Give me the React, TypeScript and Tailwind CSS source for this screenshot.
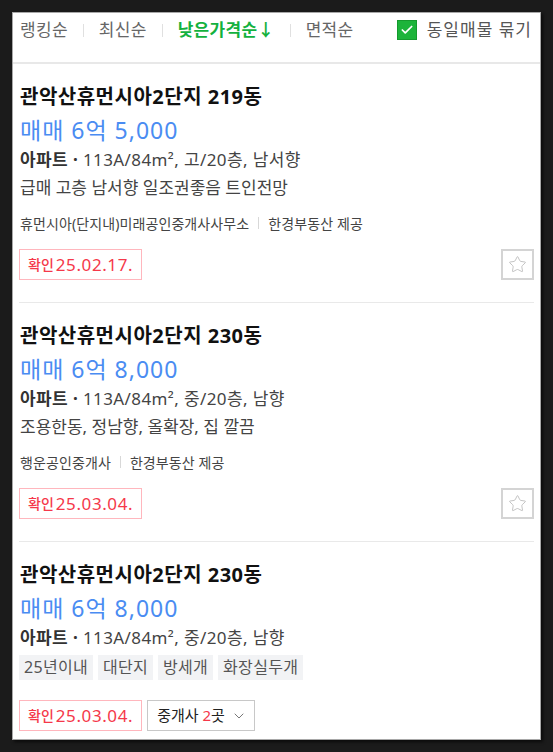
import React from "react";
import { Star, ChevronDown, Check } from "lucide-react";

type Item = {
  title: string;
  price: string;
  spec: string;
  desc?: string;
  tags?: string[];
  agency?: string;
  provider?: string;
  confirmed: string;
  brokers?: number;
};

const items: Item[] = [
  {
    title: "관악산휴먼시아2단지 219동",
    price: "매매 6억 5,000",
    spec: "113A/84m², 고/20층, 남서향",
    desc: "급매 고층 남서향 일조권좋음 트인전망",
    agency: "휴먼시아(단지내)미래공인중개사사무소",
    provider: "한경부동산 제공",
    confirmed: "25.02.17.",
  },
  {
    title: "관악산휴먼시아2단지 230동",
    price: "매매 6억 8,000",
    spec: "113A/84m², 중/20층, 남향",
    desc: "조용한동, 정남향, 올확장, 집 깔끔",
    agency: "행운공인중개사",
    provider: "한경부동산 제공",
    confirmed: "25.03.04.",
  },
  {
    title: "관악산휴먼시아2단지 230동",
    price: "매매 6억 8,000",
    spec: "113A/84m², 중/20층, 남향",
    tags: ["25년이내", "대단지", "방세개", "화장실두개"],
    confirmed: "25.03.04.",
    brokers: 2,
  },
];

const sorts = ["랭킹순", "최신순", "낮은가격순", "면적순"];

const Sep = () => <span className="mx-[15px] h-[13px] w-px bg-[#e0e0e0]" />;

const ArticleRow = ({ item, last }: { item: Item; last: boolean }) => {
  return (
    <div className="px-[6px]">
      <div className={`pt-[17px] ${last ? "" : "pb-[22px] border-b border-[#e9e9e9]"}`}>
        <div className="pl-[1px] h-[32px] leading-[32px] text-[20px] font-bold text-[#111] tracking-[0.5px]">
          {item.title}
        </div>
        <div className="pl-[1px] h-[34px] leading-[34px] text-[23px] text-[#4a8cf2] tracking-[1px]">
          {item.price}
        </div>
        <div className="pl-[1px] h-[26px] leading-[26px] text-[17px] text-[#444] tracking-[0.4px]">
          <span className="font-bold text-[#333]">아파트 · </span>
          {item.spec}
        </div>
        {item.desc && (
          <div className="pl-[1px] h-[30px] leading-[30px] text-[17px] text-[#444]">
            {item.desc}
          </div>
        )}
        {item.tags && (
          <div className="mt-[4px] flex gap-[5px]">
            {item.tags.map((t) => (
              <span
                key={t}
                className="h-[25px] leading-[25px] px-[5px] bg-[#f2f3f5] text-[16px] text-[#555] tracking-[0.3px]"
              >
                {t}
              </span>
            ))}
          </div>
        )}
        {item.agency && (
          <div className="mt-[7px] pl-[1px] h-[26px] flex items-center text-[14px] text-[#444] tracking-[0.1px]">
            <span>{item.agency}</span>
            <span className="mx-[9px] h-[12px] w-px bg-[#d8d8d8]" />
            <span>{item.provider}</span>
          </div>
        )}
        <div className={`${item.tags ? "mt-[20px]" : "mt-[13px]"} flex items-center`}>
          <span className="h-[31px] px-[8px] flex items-center border border-[#ffb6bd] text-[#f5384a]">
            <span className="text-[14px] font-medium mr-[2px]">확인</span>
            <span className="text-[17px] tracking-[0.6px]">{item.confirmed}</span>
          </span>
          {item.brokers && (
            <span className="ml-[5px] h-[31px] pl-[9px] pr-[7px] flex items-center border border-[#c8c8c8] text-[15px] text-[#222]">
              중개사&nbsp;<span className="text-[#f5384a]">{item.brokers}</span>곳
              <ChevronDown size={16} strokeWidth={1.5} className="ml-[6px] text-[#777]" />
            </span>
          )}
          {!item.brokers && (
            <span className="ml-auto w-[33px] h-[31px] flex items-center justify-center border-2 border-[#d4d4d4]">
              <Star size={19} strokeWidth={1} className="text-[#b4b4b4]" />
            </span>
          )}
        </div>
      </div>
    </div>
  );
};

export default function App() {
  return (
    <div
      className="min-h-screen bg-[#1b1b1b] pt-[12px] pl-[12px]"
      style={{ fontFamily: '"Noto Sans", "Noto Sans CJK KR", sans-serif' }}
    >
      <div className="w-[529px] h-[728px] bg-white border border-[#a8a8a8] overflow-hidden shadow-[2px_2px_3px_rgba(0,0,0,0.6)]">
        <div className="h-[51px] border-b-2 border-[#e8e8e8] pl-[7px] pr-[8px] pt-[5px]">
          <div className="h-[24px] flex items-center text-[17px] text-[#666]">
            {sorts.map((s, i) => (
              <React.Fragment key={s}>
                {i > 0 && <Sep />}
                {i === 2 ? (
                  <span className="text-[#13b13e] font-bold tracking-[0.3px]">낮은가격순↓</span>
                ) : (
                  <span className="tracking-[0.3px]">{s}</span>
                )}
              </React.Fragment>
            ))}
            <div className="ml-auto flex items-center">
              <span className="w-[20px] h-[20px] flex items-center justify-center bg-[#1cb43a] border border-[#159a2d]">
                <Check size={14} strokeWidth={3} className="text-white" />
              </span>
              <span className="ml-[10px] text-[#555] tracking-[1px]">동일매물 묶기</span>
            </div>
          </div>
        </div>
        {items.map((it, i) => (
          <ArticleRow key={i} item={it} last={i === items.length - 1} />
        ))}
      </div>
    </div>
  );
}
